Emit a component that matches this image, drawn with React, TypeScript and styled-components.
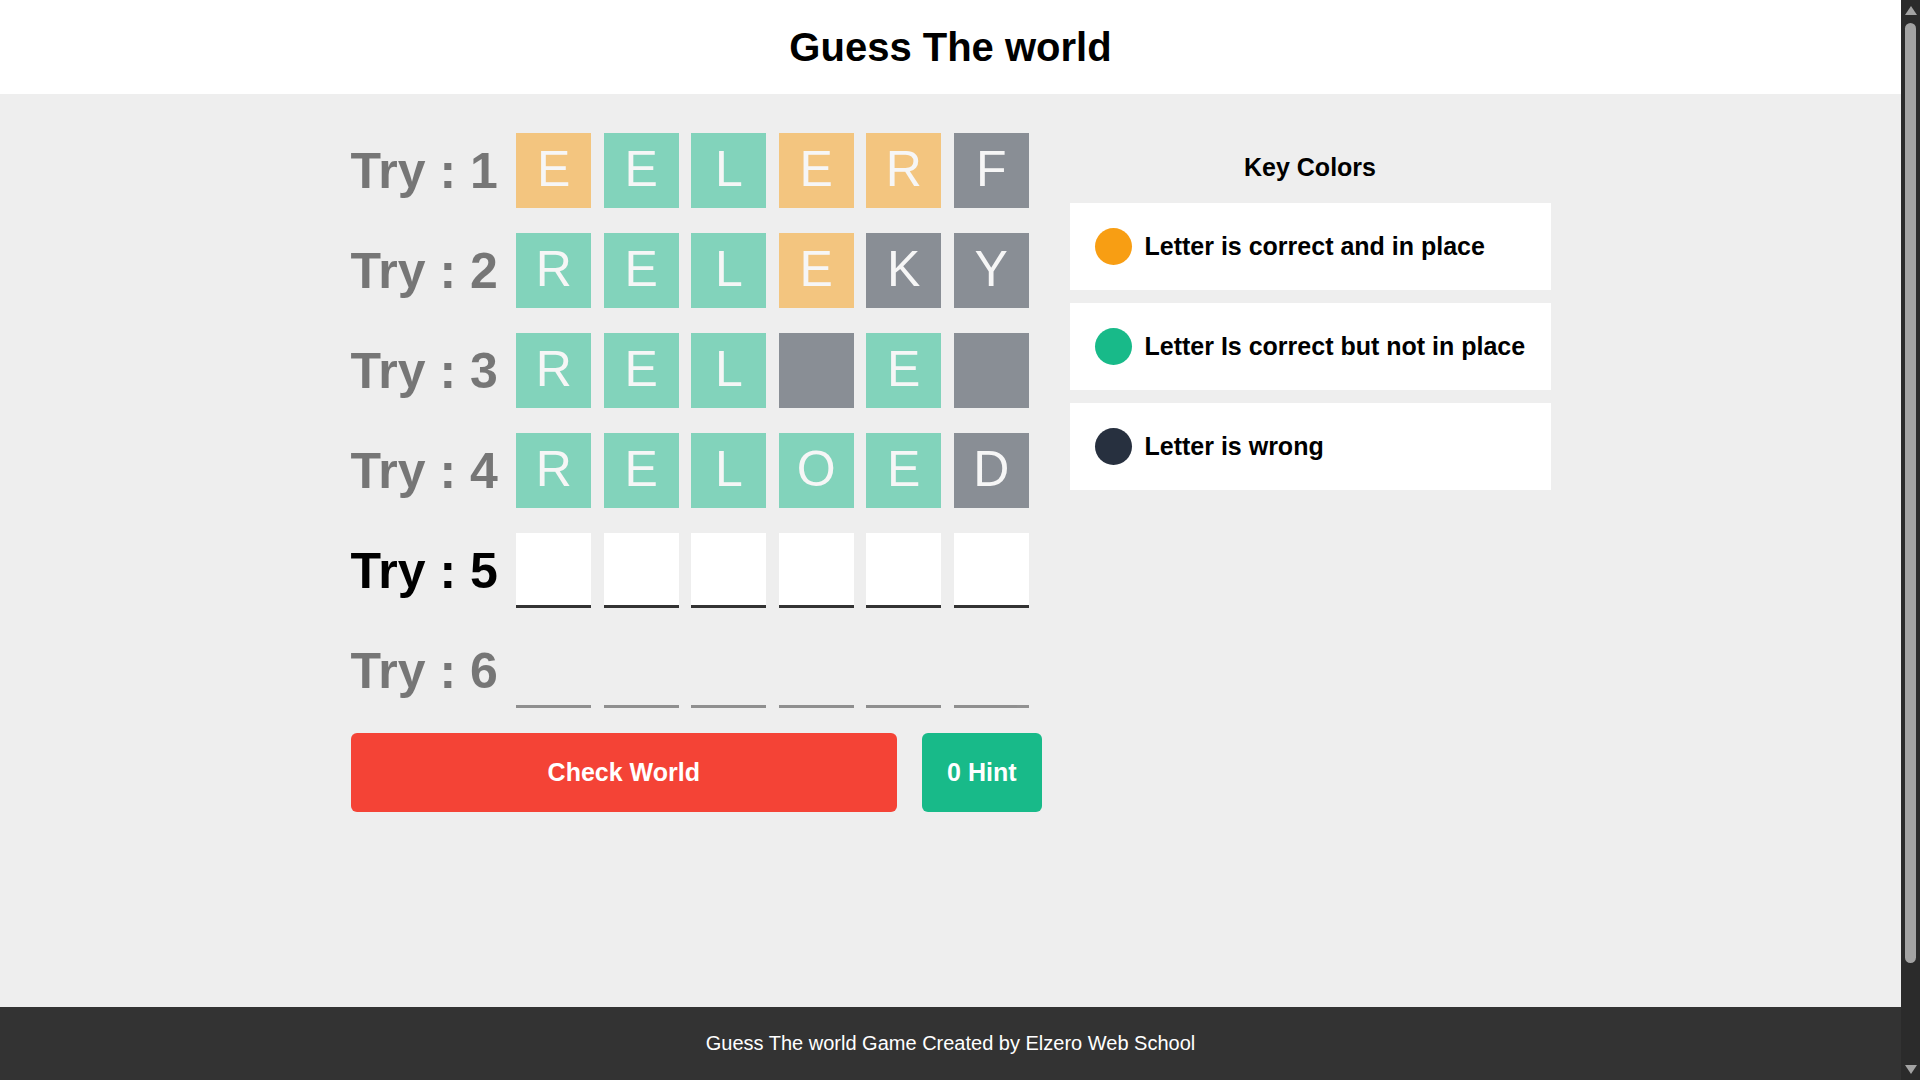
import React from 'react';
import styled, { createGlobalStyle } from 'styled-components';

type TileState = 'in-place' | 'not-in-place' | 'wrong' | 'empty';

type Attempt = {
    letters: string[];
    states: TileState[];
};

const GlobalStyle = createGlobalStyle`
    body {
        margin: 0;
        background-color: #eee;
        color: #000;
        font-family: "Liberation Sans", Arial, sans-serif;
        overflow: hidden;
    }
    * {
        box-sizing: border-box;
    }
`;

const colors = {
    inPlace: '#f89e13',
    notInPlace: '#18ba89',
    wrong: '#27303f',
};

const Shell = styled.div`
    display: flex;
    height: 100vh;
`;

const Page = styled.div`
    flex: 1;
    min-width: 0;
    display: flex;
    flex-direction: column;
`;

const Header = styled.h1`
    margin: 0;
    padding: 24px 0;
    background-color: #fff;
    text-align: center;
    font-size: 40px;
    line-height: 46px;
    font-weight: bold;
`;

const Main = styled.main`
    flex: 1;
    padding-top: 39px;
`;

const Container = styled.div`
    width: 1200px;
    margin: 0 auto;
    display: flex;
    justify-content: space-between;
    align-items: flex-start;
`;

const GameArea = styled.div`
    width: 691px;
`;

const Row = styled.div<{ $disabled: boolean }>`
    display: flex;
    align-items: center;
    height: 75px;
    margin-bottom: 25px;
    opacity: ${(props) => (props.$disabled ? 0.5 : 1)};
`;

const Label = styled.span`
    font-size: 50px;
    font-weight: bold;
    margin-right: 18.5px;
    white-space: nowrap;
    flex-shrink: 0;
`;

const Tiles = styled.div`
    display: flex;
    gap: 12.5px;
`;

const tileColor = (state: TileState) => {
    if (state === 'in-place') return colors.inPlace;
    if (state === 'not-in-place') return colors.notInPlace;
    if (state === 'wrong') return colors.wrong;
    return null;
};

const Tile = styled.div<{ $state: TileState; $active: boolean }>`
    width: 75px;
    height: 75px;
    display: flex;
    align-items: center;
    justify-content: center;
    font-size: 50px;
    color: #fff;
    background-color: ${(props) =>
        tileColor(props.$state) ?? (props.$active ? '#fff' : 'transparent')};
    border-bottom: 3.75px solid ${(props) => tileColor(props.$state) ?? '#333'};
`;

const Controls = styled.div`
    display: flex;
    gap: 25px;
`;

const Button = styled.button<{ $color: string }>`
    border: none;
    border-radius: 6px;
    padding: 25px;
    background-color: ${(props) => props.$color};
    color: #fff;
    font-family: inherit;
    font-size: 25px;
    font-weight: bold;
    line-height: 28.75px;
    cursor: pointer;
`;

const CheckButton = styled(Button)`
    flex: 1;
`;

const KeyColors = styled.div`
    width: 481px;
`;

const KeyTitle = styled.h2`
    margin: 20px 0 21px;
    text-align: center;
    font-size: 25px;
    line-height: 28.75px;
    font-weight: bold;
`;

const KeyCard = styled.div`
    display: flex;
    align-items: center;
    background-color: #fff;
    padding: 25px;
    margin-bottom: 12.5px;
`;

const Dot = styled.span<{ $color: string }>`
    width: 37.5px;
    height: 37.5px;
    border-radius: 50%;
    background-color: ${(props) => props.$color};
    margin-right: 12.5px;
    flex-shrink: 0;
`;

const KeyText = styled.span`
    font-size: 25px;
    font-weight: bold;
`;

const Footer = styled.footer`
    background-color: #333;
    color: #fff;
    text-align: center;
    font-size: 20px;
    line-height: 23px;
    padding: 25px 0;
`;

// browser scrollbar as seen in the capture
const ScrollBar = styled.div`
    width: 19px;
    flex-shrink: 0;
    background-color: #2b2b2b;
    display: flex;
    flex-direction: column;
    align-items: center;
    padding: 6px 0;
`;

const Arrow = styled.span<{ $down?: boolean }>`
    width: 0;
    height: 0;
    border-left: 6.5px solid transparent;
    border-right: 6.5px solid transparent;
    ${(props) =>
        props.$down
            ? 'border-top: 9px solid #a3a3a3; margin-top: auto;'
            : 'border-bottom: 9px solid #a3a3a3; margin-bottom: 8px;'}
`;

const Thumb = styled.span`
    width: 11px;
    height: 940px;
    border-radius: 6px;
    background-color: #a3a3a3;
`;

const P: TileState = 'in-place';
const N: TileState = 'not-in-place';
const W: TileState = 'wrong';
const X: TileState = 'empty';

const attempts: Attempt[] = [
    { letters: ['E', 'E', 'L', 'E', 'R', 'F'], states: [P, N, N, P, P, W] },
    { letters: ['R', 'E', 'L', 'E', 'K', 'Y'], states: [N, N, N, P, W, W] },
    { letters: ['R', 'E', 'L', '', 'E', ''], states: [N, N, N, W, N, W] },
    { letters: ['R', 'E', 'L', 'O', 'E', 'D'], states: [N, N, N, N, N, W] },
    { letters: ['', '', '', '', '', ''], states: [X, X, X, X, X, X] },
    { letters: ['', '', '', '', '', ''], states: [X, X, X, X, X, X] },
];

const currentTry = 5;

const keys = [
    { color: colors.inPlace, text: 'Letter is correct and in place' },
    { color: colors.notInPlace, text: 'Letter Is correct but not in place' },
    { color: colors.wrong, text: 'Letter is wrong' },
];

export default function App() {
    return (
        <>
            <GlobalStyle />
            <Shell>
                <Page>
                    <Header>Guess The world</Header>
                    <Main>
                        <Container>
                            <GameArea>
                                {attempts.map((attempt, i) => {
                                    const active = i + 1 === currentTry;
                                    return (
                                        <Row key={i} $disabled={!active}>
                                            <Label>Try : {i + 1}</Label>
                                            <Tiles>
                                                {attempt.letters.map((letter, j) => (
                                                    <Tile key={j} $state={attempt.states[j]} $active={active}>
                                                        {letter}
                                                    </Tile>
                                                ))}
                                            </Tiles>
                                        </Row>
                                    );
                                })}
                                <Controls>
                                    <CheckButton $color="#f44336">Check World</CheckButton>
                                    <Button $color={colors.notInPlace}>0 Hint</Button>
                                </Controls>
                            </GameArea>
                            <KeyColors>
                                <KeyTitle>Key Colors</KeyTitle>
                                {keys.map((k) => (
                                    <KeyCard key={k.text}>
                                        <Dot $color={k.color} />
                                        <KeyText>{k.text}</KeyText>
                                    </KeyCard>
                                ))}
                            </KeyColors>
                        </Container>
                    </Main>
                    <Footer>Guess The world Game Created by Elzero Web School</Footer>
                </Page>
                <ScrollBar>
                    <Arrow />
                    <Thumb />
                    <Arrow $down />
                </ScrollBar>
            </Shell>
        </>
    );
}
